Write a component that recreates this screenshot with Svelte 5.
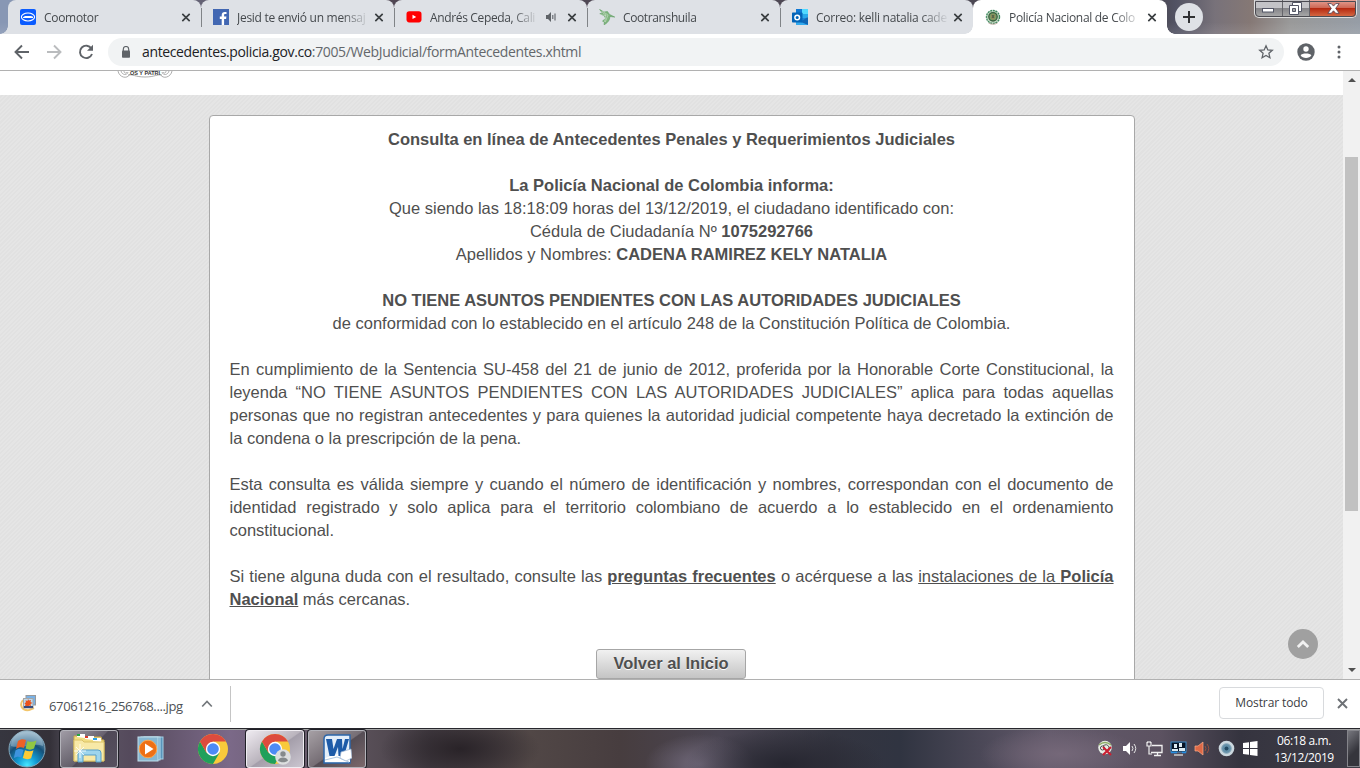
<script>
  const tabs = [
    { icon: 'coomotor', title: 'Coomotor', gap: -0.3 },
    { icon: 'facebook', title: 'Jesid te envió un mensaj', gap: -0.28 },
    { icon: 'youtube', title: 'Andrés Cepeda, Cali', gap: -0.35, sound: true },
    { icon: 'bird', title: 'Cootranshuila', gap: -0.38 },
    { icon: 'outlook', title: 'Correo: kelli natalia cade', gap: -0.25 },
    { icon: 'police', title: 'Policía Nacional de Colo', gap: -0.3, active: true }
  ];
</script>

{#snippet chromeLogo()}
  <circle cx="16" cy="16" r="15" fill="#f9ca3b" />
  <path d="M3 8.5A15 15 0 0 0 16 31l6.5-11.2L16 16 9.5 19.7Z" fill="#20a05b" />
  <path d="M3 8.5A15 15 0 0 1 29 8.5H16L9.5 19.7Z" fill="#dd4b3e" />
  <circle cx="16" cy="16" r="7.2" fill="#fff" />
  <circle cx="16" cy="16" r="5.8" fill="#4c8bf5" />
{/snippet}

<div class="screen">
  <header class="strip">
    {#each tabs as tab}
      <div class="tab" class:active={tab.active}>
        <svg class="fav" width="16" height="16" viewBox="0 0 16 16">
          {#if tab.icon === 'coomotor'}
            <rect width="16" height="16" rx="2" fill="#0b5cff" />
            <ellipse cx="8" cy="8" rx="6.6" ry="4" fill="none" stroke="#fff" stroke-width="1.1" />
            <path d="M3 8.2 5 7h6l2 .7v1.2H3Z" fill="#fff" />
          {:else if tab.icon === 'facebook'}
            <rect width="16" height="16" fill="#4267b2" />
            <path d="M8.7 16V10H6.8V7.5h1.9V6c0-2 1.2-3.1 3-3.1.9 0 1.6.1 1.8.1v2.1h-1.2c-1 0-1.2.5-1.2 1.1v1.3h2.3l-.3 2.5h-2V16Z" fill="#fff" />
          {:else if tab.icon === 'youtube'}
            <rect x="0.5" y="2.2" width="15" height="11.2" rx="2.8" fill="#f00" />
            <path d="M6.5 5.8 10.2 8l-3.7 2.1Z" fill="#fff" />
          {:else if tab.icon === 'bird'}
            <path d="M.6.4 5 3l3.5-.4 2 2.8 5.3 2.7-5-.6c.2 3.5-2.2 6.5-5.7 8.3l.2-3-1.8-.7 3-2.7-1-2.4L.8 4.7l2.7-.3Z" fill="#80b57e" stroke="#4f9552" stroke-width=".5" />
            <path d="m1 2 6 4-1.5 7M3 1.8l6 4.3L6.3 13M1 5.5l6 1.2" fill="none" stroke="#dce9dc" stroke-width=".5" />
          {:else if tab.icon === 'outlook'}
            <path d="M4 0h12v8L10 12 4 8Z" fill="#1490df" />
            <path d="M4 0h6v5H4Z" fill="#0f78d4" /><path d="M10 0h6v5h-6Z" fill="#50d9ff" />
            <path d="M10 5h6v3l-6 3Z" fill="#28a8ea" />
            <path d="M4 9h12v7H4Z" fill="#1a85d8" /><path d="m16 8-8 5 8 3Z" fill="#1066b5" />
            <path d="m4 11 12 5H4Z" fill="#32a9ed" />
            <rect y="3.5" width="10.5" height="10" rx=".7" fill="#0364b8" />
            <circle cx="5.2" cy="8.5" r="2.3" fill="none" stroke="#fff" stroke-width="1.5" />
          {:else}
            <circle cx="8" cy="8" r="6.5" fill="#c8dac6" stroke="#3f8a60" stroke-width="1.4" stroke-dasharray="2 .7" />
            <circle cx="8" cy="7.8" r="4.2" fill="#7b9c66" stroke="#37613f" stroke-width="1.3" />
            <path d="M6 5.5h4v3L8 11 6 8.5Z" fill="#948a58" />
            <path d="m7 6 2 3M9 6 7 9" stroke="#345b44" stroke-width=".8" /><path d="M3.500 14c2 1.600 7 1.600 9 0" fill="none" stroke="#c8b2aa" />
          {/if}
        </svg>
        <span class="title" style:letter-spacing="{tab.gap}px">{tab.title}</span>
        {#if tab.sound}
          <svg class="sound" width="12" height="12" viewBox="0 0 12 12">
            <path d="M1 4h2l3-3v10L3 8H1Z" fill="#5f6368" />
            <path d="M7.8 4v4M10 2.5v7" stroke="#5f6368" stroke-width="1.1" />
          </svg>
        {/if}
        <svg class="close" width="9" height="9" viewBox="0 0 9 9"><path d="m.8.8 7.4 7.4m0-7.4L.8 8.2" stroke="#3c4043" stroke-width="1.7" /></svg>
      </div>
    {/each}
    <div class="plus"><svg width="12" height="12" viewBox="0 0 12 12"><path d="M6 0v12M0 6h12" stroke="#303134" stroke-width="2" /></svg></div>
    <div class="wincontrols">
      <span><svg width="12" height="5" viewBox="0 0 12 5"><rect x=".5" y=".5" width="11" height="3.5" fill="#fff" stroke="#535666" /></svg></span>
      <span><svg width="13" height="13" viewBox="0 0 13 13"><path d="M3.5.5h9v9h-9Z" fill="#fff" stroke="#535666" /><path d="M.5 3.5h9v9h-9Z" fill="#fff" stroke="#535666" /><path d="M3.5 6.5h3v3h-3Z" fill="#aaa" stroke="#535666" /></svg></span>
      <span class="red"><svg width="13" height="11" viewBox="0 0 13 11"><path d="M.8.6h3.5l2.2 2.5L8.7.6h3.5L8.7 5.4l3.5 4.9H8.7L6.5 7.8l-2.2 2.5H.8l3.5-4.9Z" fill="#fff" stroke="#5d4a57" stroke-width=".9" /></svg></span>
    </div>
  </header>

  <div class="toolbar">
    <svg width="16" height="16" viewBox="0 0 16 16"><path d="M15 8H2M8 1.5 1.5 8 8 14.5" fill="none" stroke="#5f6368" stroke-width="1.9" /></svg>
    <svg width="16" height="16" viewBox="0 0 16 16"><path d="M1 8h13M8 1.5 14.5 8 8 14.5" fill="none" stroke="#babcbe" stroke-width="1.9" /></svg>
    <svg width="16" height="16" viewBox="0 0 16 16"><path d="M13.4 4.5A6.2 6.2 0 1 0 14 10" fill="none" stroke="#5f6368" stroke-width="1.9" /><path d="M15 .8v6H9Z" fill="#5f6368" /></svg>
    <div class="omnibox">
      <svg width="10" height="13" viewBox="0 0 10 13"><path d="M2.3 5V3.2a2.7 2.7 0 0 1 5.4 0V5" fill="none" stroke="#5f6368" stroke-width="1.2" /><rect x="1" y="4.5" width="8" height="7.3" rx=".8" fill="#5f6368" /></svg>
      <span class="url"><b>antecedentes.policia.gov.co</b>:7005/WebJudicial/formAntecedentes.xhtml</span>
      <svg class="star" width="16" height="16" viewBox="0 0 16 16"><path d="m8 1.8 1.8 4.1 4.5.4-3.4 3 1 4.4L8 11.4l-3.9 2.3 1-4.4-3.4-3 4.5-.4Z" fill="none" stroke="#5f6368" stroke-width="1.3" /></svg>
    </div>
    <svg class="person" width="18" height="18" viewBox="0 0 18 18"><circle cx="9" cy="9" r="8.7" fill="#5f6368" /><circle cx="9" cy="6" r="2.7" fill="#fff" /><path d="M3.6 12.3C5 9.8 13 9.8 14.4 12.3 12.5 16 5.500 16 3.600 12.300Z" fill="#fff" /></svg>
    <svg class="dots" width="4" height="16" viewBox="0 0 4 16"><g fill="#5f6368"><circle cx="2" cy="3" r="1.500" /><circle cx="2" cy="8" r="1.500" /><circle cx="2" cy="13" r="1.500" /></g></svg>
  </div>

  <div class="viewport">
    <main>
      <div class="band">
        <svg width="56" height="8" viewBox="0 0 56 8">
          <path d="M1 0c1 6 9 9 12 3M4 0c1 4 6 5 7 1M7 0c0 2 2 3 3 1M55 0c-1 6-9 9-12 3M52 0c-1 4-6 5-7 1M49 0c0 2-2 3-3 1M11 4c5-1 7 2 17 2s12-3 17-2" fill="none" stroke="#999" stroke-width=".8" />
          <text x="28" y="4" text-anchor="middle" font-family="Liberation Sans, sans-serif" font-weight="bold" font-size="5.500" fill="#333">OS Y PATRI</text>
        </svg>
      </div>
      <section class="card">
        <p class="center"><b>Consulta en línea de Antecedentes Penales y Requerimientos Judiciales</b></p>
        <p class="center">
          <b>La Policía Nacional de Colombia informa:</b><br />
          Que siendo las 18:18:09 horas del 13/12/2019, el ciudadano identificado con:<br />
          Cédula de Ciudadanía Nº <b>1075292766</b><br />
          Apellidos y Nombres: <b>CADENA RAMIREZ KELY NATALIA</b>
        </p>
        <p class="center">
          <b>NO TIENE ASUNTOS PENDIENTES CON LAS AUTORIDADES JUDICIALES</b><br />
          de conformidad con lo establecido en el artículo 248 de la Constitución Política de Colombia.
        </p>
        <p>En cumplimiento de la Sentencia SU-458 del 21 de junio de 2012, proferida por la Honorable Corte Constitucional, la leyenda “NO TIENE ASUNTOS PENDIENTES CON LAS AUTORIDADES JUDICIALES” aplica para todas aquellas personas que no registran antecedentes y para quienes la autoridad judicial competente haya decretado la extinción de la condena o la prescripción de la pena.</p>
        <p>Esta consulta es válida siempre y cuando el número de identificación y nombres, correspondan con el documento de identidad registrado y solo aplica para el territorio colombiano de acuerdo a lo establecido en el ordenamiento constitucional.</p>
        <p>Si tiene alguna duda con el resultado, consulte las <u><b>preguntas frecuentes</b></u> o acérquese a las <u>instalaciones de la <b>Policía Nacional</b></u> más cercanas.</p>
        <button>Volver al Inicio</button>
      </section>
      <div class="totop"><svg width="14" height="10" viewBox="0 0 14 10"><path d="m1.800 8 5.200-5 5.200 5" fill="none" stroke="#f1f1f1" stroke-width="2.800" /></svg></div>
    </main>
    <div class="scrollbar">
      <svg width="8" height="4" viewBox="0 0 8 4"><path d="M0 4h8L4 0Z" fill="#505050" /></svg>
      <div class="thumb"></div>
      <svg class="down" width="8" height="4" viewBox="0 0 8 4"><path d="M0 0h8L4 4Z" fill="#505050" /></svg>
    </div>
  </div>

  <div class="downloads">
    <svg class="file" width="17" height="17" viewBox="0 0 17 17">
      <path d="M3 5c-4 5-1 11 6 10l5-2" fill="none" stroke="#f3c66b" stroke-width="2" />
      <rect x="6" y=".5" width="9.500" height="9.500" fill="#7ab2e6" stroke="#999" />
      <rect x="3.500" y="3.500" width="9.500" height="9.500" fill="#bad9ef" stroke="#a6a6a6" />
      <path d="m8 4 1 1.500 2-.5-.5 2 2 1-2 1 .5 2-2-.5-1 2-1-1.500-2 .3.500-2-1-1 1.500-1-.5-2L7.500 6Z" fill="#ec531b" /><path d="M4 11h9v2H4Z" fill="#394b7c" />
    </svg>
    <span class="fname">67061216_256768....jpg</span>
    <svg class="chev" width="12" height="8" viewBox="0 0 12 8"><path d="m1.200 6.500 4.800-5 4.800 5" fill="none" stroke="#73777b" stroke-width="1.700" /></svg>
    <div class="rule"></div>
    <div class="showall">Mostrar todo</div>
    <svg class="shut" width="11" height="11" viewBox="0 0 11 11"><path d="m1 1 9 9m0-9-9 9" stroke="#6d7175" stroke-width="1.900" /></svg>
  </div>

  <footer>
    <svg class="start" width="40" height="40" viewBox="0 0 40 40">
      <defs><radialGradient id="orb" cx=".5" cy=".95" r=".9"><stop offset="0" stop-color="#47e8ff" /><stop offset=".3" stop-color="#129bd4" /><stop offset=".65" stop-color="#155078" /><stop offset="1" stop-color="#93afc3" /></radialGradient></defs>
      <circle cx="20" cy="20" r="18" fill="url(#orb)" stroke="#82a7bb" />
      <path d="M4 17a16 16 0 0 1 32 0c-11-4-20 4-32 0Z" fill="#b8d4e4" opacity=".4" />
      <path d="M11 12c3-2 5-2 8-1l-2 8c-3-1-5-1-8 1Z" fill="#ed6126" />
      <path d="M20.500 12c3 1.400 6 1 9-.5l-2.500 8c-3 1.500-5 1.500-8.400.1Z" fill="#91c742" />
      <path d="M8.500 21.500c3-2 5-1.700 8-.6l-2.200 7.500c-3-1.200-5-.8-7.500.8Z" fill="#3e94de" />
      <path d="M18 21.200c3.400 1.500 6 1.300 8.500 0l-2.400 8c-3 1.500-5.500 1.300-8.300-.1Z" fill="#fdcb35" />
    </svg>
    <div class="task explorer">
      <svg width="34" height="32" viewBox="0 0 34 32">
        <path d="M2 5V3h9l2 2h7v-1h9l1 3h2v21H2Z" fill="#f2dd83" stroke="#c9ac4b" />
        <path d="M5 4V1h8v4M13 6V3h9v4M21 8V5h8v4" fill="#fff" /><path d="M5 1h3v2H5Z" fill="#25a440" /><path d="M13 3h3v2h-3Z" fill="#db3b2a" /><path d="M21 5h4v2h-4Z" fill="#2ba2e6" />
        <path d="M2 7h8l2 2h20v19H2Z" fill="#f8e9a7" stroke="#dbc267" />
        <path d="M6 29V20q0-3 3-3h17q3 0 3 3v9h-5v-7H11v7Z" fill="#9ed5ed" stroke="#579fc9" />
        <path d="M8 11v14M2 18h12M4 14l8 8m0-8-8 8" stroke="#fff" stroke-width=".8" />
      </svg>
    </div>
    <svg class="wmp" width="28" height="26" viewBox="0 0 28 26">
      <rect x="7" y="1" width="19" height="22" fill="#5994ba" stroke="#a5d1e6" /><rect x="4" y="1" width="19" height="23" fill="#659fc3" stroke="#b9dcec" />
      <rect x="1" y="1" width="20" height="24" fill="#86b7d2" stroke="#bfdeea" /><circle cx="11" cy="13" r="8.800" fill="#ee7015" stroke="#f9a851" /><path d="m8 7.500 8.500 5.500L8 18.500Z" fill="#fff" />
    </svg>
    <svg class="chrome" width="32" height="32" viewBox="0 0 32 32">{@render chromeLogo()}</svg>
    <div class="task current">
      <svg width="32" height="32" viewBox="0 0 32 32">{@render chromeLogo()}<circle cx="24" cy="24" r="7.800" fill="#dcdedf" /><circle cx="24" cy="21" r="2.700" fill="#858a8c" /><path d="M19 27.500c1-4 9-4 10 0-2 2.400-8 2.400-10 0Z" fill="#858a8c" /></svg>
    </div>
    <div class="task word">
      <svg width="30" height="30" viewBox="0 0 30 30">
        <path d="M2 5q0-4 4-4h22v28H2Z" fill="#e3eef9" stroke="#2d67aa" stroke-width="1.500" />
        <path d="m3 24 16-5 9 3v6H3Z" fill="#fff" /><path d="m3 26 12-3 12 5" fill="none" stroke="#adc8e2" />
        <path d="M4 5h6l1.500 10L15 5h5l.5 10L23 5h4l-5 17h-5.500L16 13l-3.500 9H7.500Z" fill="#1d5ba8" />
        <path d="m19 18 10-3 1 9-6 3-6-3Z" fill="#fff" stroke="#9ab2d0" stroke-width=".7" />
      </svg>
    </div>
    <div class="tray">
      <svg width="17" height="17" viewBox="0 0 17 17"><circle cx="8" cy="7.500" r="6.800" fill="#e8eee6" /><path d="M2 5q6-5 12 0" stroke="#8bac62" fill="none" stroke-width="1.300" /><circle cx="5.500" cy="8" r="2" fill="#fff" stroke="#444" /><path d="M6 6q4-3 6 1v4" stroke="#555" fill="none" /><path d="m6 7 8 8m0-8-8 8" stroke="#ca2032" stroke-width="2.200" /></svg>
      <svg width="17" height="17" viewBox="0 0 17 17"><path d="M1 6h3l4-4v13l-4-4H1Z" fill="#fff" /><path d="M10 6q2 2.500 0 5m2-7q3.500 4.500 0 9" stroke="#e7e7e7" fill="none" /></svg>
      <svg width="17" height="17" viewBox="0 0 17 17"><path d="M6 5.500h10v7H5M8 15.500h7M11.500 13v2" fill="none" stroke="#f1f1f1" stroke-width="1.300" /><path d="M1 2v4h4V2M2 1v2m2-2v2M3 6v8h3" fill="none" stroke="#eee" stroke-width="1.200" /></svg>
      <svg width="17" height="17" viewBox="0 0 17 17"><rect x="1" y="2" width="15" height="10" fill="#071426" stroke="#438dc9" /><path d="M4 4h3v4H4ZM9 3h3v4H9ZM2 9h6v2H2Zm7-1h6v3H9Z" fill="#dceaf2" /><path d="M1 12.500h6m5 0h4" stroke="#268ee2" stroke-width="1.500" /><path d="M4 15h9" stroke="#ccc" stroke-width="1.500" /></svg>
      <svg width="17" height="17" viewBox="0 0 17 17"><path d="M1 6h3l5-4v13l-5-4H1Z" fill="#dd6846" stroke="#ffad88" stroke-width=".7" /><path d="M11 6q2 2.500 0 5m2-7q3.500 4.500 0 9" stroke="#9c5140" fill="none" /></svg>
      <svg width="17" height="17" viewBox="0 0 17 17"><circle cx="8.500" cy="8.500" r="7.800" fill="#cbd8df" /><circle cx="8.500" cy="8.500" r="4.800" fill="#6390a9" stroke="#8baabb" /><circle cx="8.500" cy="8.500" r="2" fill="#244b64" /></svg>
      <svg width="17" height="17" viewBox="0 0 17 17"><path d="m1 3 6-.8V8H1Zm7-.9 7.500-1V8H8ZM1 9h6v5.800L1 14Zm7 0h7.500v7L8 15Z" fill="#fff" /></svg>
    </div>
    <div class="clock"><span>06:18 a.m.</span><span>13/12/2019</span></div>
    <div class="peek"></div>
  </footer>
</div>

<style>
  :global(body) { margin: 0; overflow: hidden; }
  .screen { width: 1360px; height: 768px; display: flex; flex-direction: column; font-family: "Open Sans", "Noto Sans", sans-serif; background: #fff; overflow: hidden; }
  svg { display: block; flex: none; }
  .strip { height: 34px; flex: none; display: flex; padding-left: 8px; box-sizing: border-box;
    background: linear-gradient(#0000 65%, #ffffff18), linear-gradient(90deg, #8897b4 0, #8897b4 8px, #514653 300px, #4b4954 1160px, #515263 1175px, #78727a 1215px, #857875 1250px, #999 1290px, #969da6 1360px); }
  .tab { width: 193px; height: 34px; box-sizing: border-box; display: flex; align-items: center; padding-left: 12px; background: #dee1e6; border-radius: 8px 8px 0 0; position: relative; flex: none; }
  .tab::after { content: ""; position: absolute; right: -1px; top: 8px; width: 1px; height: 19px; background: #808387; z-index: 1; }
  .tab:first-child::before { content: ""; position: absolute; left: -8px; bottom: 0; width: 8px; height: 8px; background: radial-gradient(circle at 0 0, transparent 7.500px, #dee1e6 8px); }
  .tab:nth-child(5) { border-bottom-right-radius: 8px; box-shadow: 0 8px 0 #fff; clip-path: inset(0 -1px 0 0); }
  .tab:nth-child(5)::after, .active::after { display: none; }
  .active { width: 194px; background: #fff; }
  .active::before, .active::after { content: ""; position: absolute; bottom: 0; width: 8px; height: 8px; }
  .active::before { left: -8px; background: radial-gradient(circle at 0 0, transparent 7.500px, #fff 8px); }
  .active::after { display: block; right: -8px; top: auto; background: radial-gradient(circle at 100% 0, transparent 7.500px, #fff 8px); }
  .title { margin-left: 8px; width: 131px; overflow: hidden; white-space: nowrap; font-size: 12px; line-height: 17px; color: #45494d; -webkit-mask-image: linear-gradient(90deg, #000 105px, transparent 133px); }
  .title:has(+ .sound) { width: 108px; -webkit-mask-image: linear-gradient(90deg, #000 82px, transparent 109px); }
  .sound { margin-left: 7px; }
  .close { margin-left: auto; margin-right: 11px; transform: translateX(.5px); }
  .plus { width: 28px; height: 28px; margin: 3px 0 0 8px; border-radius: 50%; background: #dee1e6; display: grid; place-items: center; }
  .wincontrols { margin-left: auto; margin-right: 3px; height: 17px; display: flex; border: 1px solid #ddd; outline: 1px solid #4b4b52; outline-offset: -2px; border-top: 0; border-radius: 0 0 5px 5px; overflow: hidden; background: linear-gradient(#c3c3c7 0 45%, #858589 50%, #aaa); }
  .wincontrols span { width: 26.500px; display: grid; place-items: center; border-right: 1px solid #65656b; }
  .wincontrols span:first-child svg { margin-top: 4px; }
  .wincontrols .red { width: 46px; border: 0; background: linear-gradient(#e6a498, #ce6855 45%, #b62a11 50%, #d86f48); }
  .toolbar { height: 36px; flex: none; display: flex; align-items: center; padding-left: 14px; gap: 16px; border-bottom: 1px solid #b1b1b1; background: #fff; }
  .omnibox { width: 1176px; height: 28px; margin-left: -2px; border-radius: 14px; background: #f1f3f4; display: flex; align-items: center; padding-left: 13px; box-sizing: border-box; }
  .url { margin-left: 11px; font-size: 14px; color: #63676b; letter-spacing: -.36px; white-space: nowrap; line-height: 18px; }
  .url b { font-weight: 400; color: #202124; }
  .star { margin-left: auto; margin-right: 10px; }
  .person { margin-left: -3px; }
  .dots { margin-left: 5.500px; }
  .viewport { height: 608px; flex: none; display: flex; }
  main { width: 1343px; height: 608px; overflow: hidden; position: relative; background: repeating-linear-gradient(135deg, #e1e1e1 0 1.500px, #e5e5e5 1.500px 3px); }
  .band { height: 24px; background: #fff; padding-left: 117px; }
  .card { width: 926px; height: 600px; box-sizing: border-box; margin: 20px 0 0 209px; padding: 12px 20.500px 12px 19.500px; border: 1px solid #a8a8a8; border-radius: 4px; background: #fff; color: #4f4f4f; font: 16.500px/23px "Liberation Sans", Arial, sans-serif; }
  p { margin: 0 0 23px; text-align: justify; }
  p.center { text-align: center; }
  button { display: block; width: 150px; height: 30px; margin: 38px 0 0 366.500px; padding: 0 0 2px; border: 1px solid #a6a6a6; border-radius: 3px; background: linear-gradient(#f1f1f1, #c4c4c4); font: bold 16.500px "Liberation Sans", Arial, sans-serif; color: #4f4f4f; text-shadow: 0 1px #fff; }
  .totop { position: absolute; left: 1288px; top: 558px; width: 30px; height: 30px; border-radius: 50%; background: #a0a0a0; display: grid; place-items: center; }
  .scrollbar { width: 17px; background: #f1f1f1; display: flex; flex-direction: column; align-items: center; padding: 7px 0 7px; box-sizing: border-box; }
  .thumb { width: 13px; height: 354px; margin-top: 75px; background: #c1c1c1; }
  .down { margin-top: auto; }
  .downloads { height: 49px; flex: none; box-sizing: border-box; border-top: 1px solid #b1b1b1; display: flex; align-items: center; padding-left: 20px; background: #fff; }
  .file { margin-bottom: 2px; }
  .fname { margin: 4px 0 0 12px; width: 135px; font-size: 13px; line-height: 18px; color: #4d5155; letter-spacing: -.36px; white-space: nowrap; }
  .chev { margin-left: 17px; }
  .rule { width: 1px; height: 36px; margin-left: 17px; background: #c5c5c5; }
  .showall { margin: -2px 0 0 auto; width: 105px; height: 32px; box-sizing: border-box; border: 1px solid #d8dadd; border-radius: 4px; text-align: center; font-size: 12px; line-height: 29px; color: #3c4043; letter-spacing: -.1px; }
  .shut { margin: -2px 12px 0 13px; }
  footer { height: 40px; flex: none; box-sizing: border-box; border-top: 1px solid #27272d; box-shadow: inset 0 1px #a4a5a5; display: flex; align-items: center; padding-left: 7px; overflow: hidden;
    background: radial-gradient(ellipse 80px 28px at 1060px 25px, #756879, transparent), radial-gradient(ellipse 100px 35px at 785px 35px, #262630, transparent), radial-gradient(ellipse 55px 30px at 700px 35px, #71697a, transparent), radial-gradient(ellipse 80px 35px at 460px 20px, #292328, transparent), linear-gradient(90deg, #36363f 0, #343139 50px, #5f5a68 80px, #554a5c 130px, #7b6988 230px, #5d535c 350px, #453e45 430px, #514746 530px, #473d3f 620px, #4a4552 720px, #343540 830px, #303441 900px, #62596a 1050px, #5c5261 1160px, #35343f 1240px, #3e3d47 1360px); }
  .task { width: 58px; height: 38px; margin-top: 1px; box-sizing: border-box; border: 1px solid #b3b3ba; border-radius: 3px; box-shadow: 0 0 0 1px #202027; display: grid; place-items: center; flex: none; background: linear-gradient(135deg, #b8b4bdcc, #77717c77 50%, #403d4866 52%, #56526088); }
  .explorer { margin-left: 13px; }
  .wmp { margin-left: 19px; }
  .chrome { margin-left: 32px; }
  .current { margin-left: 17px; background: linear-gradient(145deg, #eeeaf0, #bab4bd 50%, #a49eaa 52%, #cbc6d0); border-color: #f0edf2; }
  .word { margin-left: 4px; background: linear-gradient(145deg, #a6a0a5, #766e75 50%, #554d55 52%, #7b686b); }
  .tray { display: flex; gap: 7.100px; margin-left: auto; align-items: center; }
  .clock { width: 76px; margin-left: 7px; display: flex; flex-direction: column; align-items: center; font-size: 12px; line-height: 17px; color: #fff; letter-spacing: -.4px; }
  .clock span { white-space: nowrap; }
  .peek { width: 13px; height: 37px; margin-left: 5px; box-sizing: border-box; border: 1px solid #85858b; background: linear-gradient(135deg, #77777e, #35353c 60%); }
</style>
